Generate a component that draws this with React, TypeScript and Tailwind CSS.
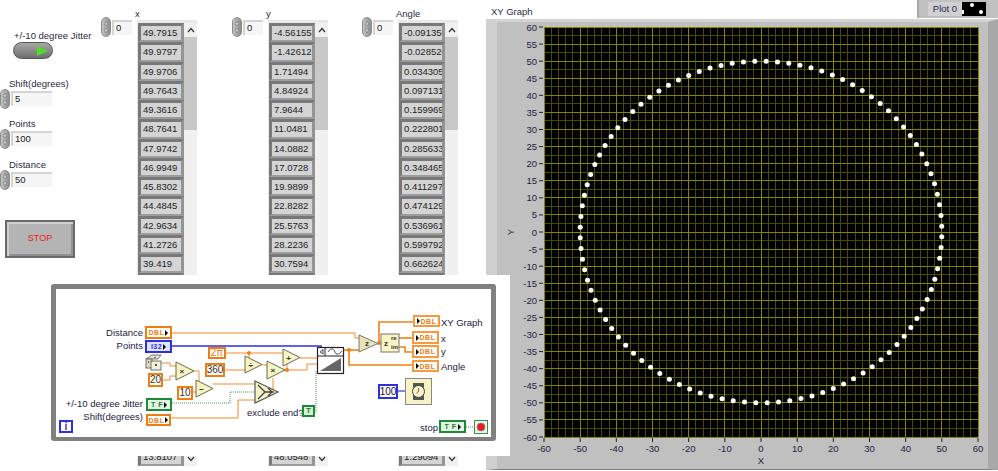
import React from 'react';

const STEP = 0.0628319;
const START = -0.09135;

const xTop = ['49.7915', '49.9797', '49.9706', '49.7643', '49.3616', '48.7641', '47.9742', '46.9949', '45.8302', '44.4845', '42.9634', '41.2726', '39.419'];
const yTop = ['-4.56155', '-1.42612', '1.71494', '4.84924', '7.9644', '11.0481', '14.0882', '17.0728', '19.9899', '22.8282', '25.5763', '28.2236', '30.7594'];
const aTop = ['-0.091350', '-0.028520', '0.034305', '0.097131', '0.159969', '0.222801', '0.285633', '0.348465', '0.411297', '0.474129', '0.536961', '0.599792', '0.662624'];

// rows between 13 and 22 sit behind the diagram window
const fill = (top: string[], last: string, fn: (a: number) => number) => {
  const rows = [...top];
  for (let k = 13; k < 22; k++) rows.push(fn(START + STEP * k).toPrecision(6));
  rows.push(last);
  return rows;
};

const xRows = fill(xTop, '13.8107', (a) => 50 * Math.cos(a));
const yRows = fill(yTop, '48.0548', (a) => 50 * Math.sin(a));
const aRows = fill(aTop, '1.29094', (a) => a);

const Spinner = ({ className = '' }: { className?: string }) => (
  <div className={`w-[10px] h-[20px] shrink-0 rounded-full bg-gradient-to-r from-[#c4c4c4] to-[#8e8e8e] border border-[#8c8c8c] flex flex-col items-center justify-center gap-[2px] ${className}`}>
    <svg width="6" height="6" viewBox="0 0 6 6"><path d="M3 1 L5 5 H1 Z" fill="#d8d8d8" stroke="#707070" strokeWidth="0.6" /></svg>
    <svg width="6" height="6" viewBox="0 0 6 6"><path d="M3 5 L5 1 H1 Z" fill="#d8d8d8" stroke="#707070" strokeWidth="0.6" /></svg>
  </div>
);

const NumInput = ({ value, className = '' }: { value: string; className?: string }) => (
  <div className={`h-[15px] bg-[#f5f5f5] border-t-2 border-l-2 border-[#d4d4d4] pl-[2px] text-[9.5px] leading-[12px] text-[#222] ${className}`}>
    {value}
  </div>
);

const LabeledNum = ({ label, value, className = '' }: { label: string; value: string; className?: string }) => (
  <div className={`flex flex-col ${className}`}>
    <div className="pl-[9px] text-[9.5px] leading-[12px] text-[#2a2a40] whitespace-nowrap">{label}</div>
    <div className="flex items-start mt-[-1px]">
      <Spinner />
      <NumInput value={value} className="ml-[1px] mt-[2px] w-[41px]" />
    </div>
  </div>
);

const Cell = ({ value }: { value: string }) => (
  <div className="h-[19.25px] w-[46px] shrink-0 border-t-[3px] border-l-[3px] border-r-[3px] border-b-2 border-t-[#787878] border-l-[#787878] border-r-[#949494] border-b-[#9c9c9c] bg-[#d4d4d4] overflow-hidden pl-[2px] text-[9.5px] leading-[13px] text-[#222] whitespace-nowrap">
    {value}
  </div>
);

const ScrollBar = () => (
  <div className="w-[13px] h-full bg-[#f0f0f0] flex flex-col">
    <div className="h-[14px] flex items-center justify-center">
      <svg width="8" height="6" viewBox="0 0 8 6"><path d="M1 5 L4 1.5 L7 5" fill="none" stroke="#333" strokeWidth="1.2" /></svg>
    </div>
    <div className="h-[93px] bg-[#c8c8c8]" />
    <div className="mt-auto h-[14px] flex items-center justify-center">
      <svg width="8" height="6" viewBox="0 0 8 6"><path d="M1 1 L4 4.5 L7 1" fill="none" stroke="#333" strokeWidth="1.2" /></svg>
    </div>
  </div>
);

const ArrayColumn = ({ label, rows, className = '' }: { label: string; rows: string[]; className?: string }) => (
  <div className={`flex flex-col shrink-0 pt-[8px] ${className}`}>
    <div className="pl-[34px] h-[12px] text-[9.5px] leading-[12px] text-[#2a2a40]">{label}</div>
    <div className="flex items-start">
      <div className="w-[36px] flex items-start">
        <Spinner className="mt-[-3px]" />
        <NumInput value="0" className="ml-[1px] w-[20px]" />
      </div>
      <div className="flex bg-[#e4e4e4] border-t-[3px] border-l-[1px] border-[#e8e8e8] h-[446px]">
        <div className="flex flex-col bg-[#bcbcbc]">
          {rows.map((r, i) => (
            <Cell key={i} value={r} />
          ))}
        </div>
        <div className="h-[443px]">
          <ScrollBar />
        </div>
      </div>
    </div>
  </div>
);

const px = (v: number) => 544 + ((v + 60) * 434) / 120;
const py = (v: number) => 27 + ((60 - v) * 410) / 120;

const range = (from: number, to: number, step: number) => {
  const out: number[] = [];
  for (let v = from; v <= to + 0.001; v += step) out.push(v);
  return out;
};

const dots = range(0, 99, 1).map((k) => {
  const a = START + STEP * k;
  return { x: 50 * Math.cos(a), y: 50 * Math.sin(a) };
});

const Graph = () => (
  <svg width="491" height="448" viewBox="497 22 491 448" className="block">
    <rect x="544" y="27" width="434" height="410" fill="#000" />
    <g shapeRendering="crispEdges">
      {range(-60, 60, 2).map((v) => (
        <line key={`vm${v}`} x1={px(v)} x2={px(v)} y1="27" y2="437" stroke="#4a4a00" strokeWidth="1" />
      ))}
      {range(-60, 60, 2.5).map((v) => (
        <line key={`hm${v}`} x1="544" x2="978" y1={py(v)} y2={py(v)} stroke="#4a4a00" strokeWidth="1" />
      ))}
      {range(-60, 60, 10).map((v) => (
        <line key={`vM${v}`} x1={px(v)} x2={px(v)} y1="27" y2="437" stroke="#858500" strokeWidth="1" />
      ))}
      {range(-60, 60, 5).map((v) => (
        <line key={`hM${v}`} x1="544" x2="978" y1={py(v)} y2={py(v)} stroke="#858500" strokeWidth="1" />
      ))}
    </g>
    {dots.map((d, i) => (
      <circle key={i} cx={px(d.x)} cy={py(d.y)} r="2.5" fill="#fff" />
    ))}
    {range(-60, 60, 5).map((v) => (
      <g key={`yl${v}`}>
        <line x1="539" x2="543" y1={py(v)} y2={py(v)} stroke="#222" />
        <text x="537" y={py(v) + 3.5} textAnchor="end" fontSize="9.5" fill="#222240">{v}</text>
      </g>
    ))}
    {range(-60, 60, 10).map((v) => (
      <g key={`xl${v}`}>
        <line x1={px(v)} x2={px(v)} y1="438" y2="442" stroke="#222" />
        <text x={px(v)} y="452" textAnchor="middle" fontSize="9.5" fill="#222240">{v}</text>
      </g>
    ))}
    <text x={px(0)} y="464" textAnchor="middle" fontSize="9.5" fill="#222240">X</text>
    <text x="514" y="232" textAnchor="middle" fontSize="9.5" fill="#222240" transform="rotate(-90 514 232)">Y</text>
  </svg>
);

// control terminals carry the arrow on the right, indicators on the left
const Term = ({ label, kind, className = '' }: { label: string; kind: 'in' | 'out'; className?: string }) => (
  <div className={`absolute flex items-center justify-center font-bold text-[7px] leading-none tracking-[0.5px] ${className}`}>
    {kind === 'out' && <span className="w-0 h-0 border-y-[3px] border-y-transparent border-l-[3px] border-l-black mr-[1px]" />}
    <span>{label}</span>
    {kind === 'in' && <span className="w-0 h-0 border-y-[3px] border-y-transparent border-l-[3px] border-l-black ml-[1px]" />}
  </div>
);

const Const = ({ value, className = '' }: { value: string; className?: string }) => (
  <div className={`absolute flex items-center justify-center bg-white border-2 border-[#f07c14] text-[10px] leading-none text-[#3a2a10] ${className}`}>{value}</div>
);

const Tri = ({ x, y, w, h, sym }: { x: number; y: number; w: number; h: number; sym: string }) => (
  <g>
    <path d={`M${x} ${y} L${x + w} ${y + h / 2} L${x} ${y + h} Z`} fill="#f7f3c4" stroke="#6a6a50" strokeWidth="1" />
    <text x={x + w * 0.33} y={y + h / 2 + 3} textAnchor="middle" fontSize="8" fontWeight="bold" fill="#333">{sym}</text>
  </g>
);

const lbl = 'absolute text-[9.5px] leading-[12px] text-[#222240] whitespace-nowrap';

const Diagram = () => (
  <div className="absolute left-[51px] top-[275px] w-[459px] h-[181px] bg-white">
    <div className="absolute left-0 top-[9px] w-[445px] h-[157px] rounded-[3px] border-l-[5px] border-t-[5px] border-r-[5px] border-b-[4px] border-[#808080] bg-white" />
    <svg width="459" height="181" viewBox="51 275 459 181" className="absolute left-0 top-0">
      <g fill="none" stroke="#f58a28" strokeWidth="1">
        <path d="M172 333 H355 V338 H360" />
        <path d="M225 353 H283" />
        <path d="M249 353 V359" />
        <path d="M225 370 H245" />
        <path d="M262 365 H268" />
        <path d="M161 363 H170 V366 H176" />
        <path d="M162 380 H170 V376 H176" />
        <path d="M194 371 H199 V384" />
        <path d="M192 392 H196" />
        <path d="M213 384 H255" />
        <path d="M171 418 H238 V400 H255" />
        <path d="M278 392 H273 V378" />
        <path d="M285 370 H307 V364 H317" />
        <path d="M287 370 V361 H284" />
        <path d="M300 358 H317" />
      </g>
      <g fill="none" stroke="#f08214" strokeWidth="1.6">
        <path d="M344 350 H360" />
        <path d="M349 350 V365 H412" />
        <path d="M378 343 H381" />
        <path d="M379 343 V322 H413" />
        <path d="M399 338 H412" />
        <path d="M399 347 H405 V352 H412" />
      </g>
      <circle cx="249" cy="353" r="2" fill="#f08214" />
      <circle cx="287" cy="370" r="2" fill="#f08214" />
      <circle cx="349" cy="350" r="2" fill="#f08214" />
      <circle cx="379" cy="343" r="2" fill="#f08214" />
      <path d="M172 346 H321 V350" fill="none" stroke="#2f2fe0" strokeWidth="1.6" />
      <path d="M398 391 H405" fill="none" stroke="#5050e0" strokeWidth="1.4" />
      <g fill="none" stroke="#3aa050" strokeWidth="1" strokeDasharray="1 1">
        <path d="M172 403 H230 V392 H255" />
        <path d="M316 371 V412" />
        <path d="M466 427 H474" />
      </g>
      <Tri x={176} y={362} w={18} h={18} sym="×" />
      <Tri x={196} y={380} w={17} h={17} sym="−" />
      <Tri x={245} y={356} w={17} h={17} sym="÷" />
      <Tri x={267} y={361} w={18} h={18} sym="×" />
      <Tri x={283} y={349} w={17} h={17} sym="+" />
      <path d="M255 381 L278 392 L255 403 Z" fill="#f7f3c4" stroke="#555" strokeWidth="1.2" />
      <path d="M258 385 L265 392 L258 399 M265 392 H274 M268 388 L272 392 L268 396" fill="none" stroke="#444" strokeWidth="1.4" />
      <path d="M359 335 L378 343.5 L359 352 Z" fill="#e8e4b8" stroke="#777" strokeWidth="1" />
      <text x="367" y="346" textAnchor="middle" fontSize="8" fontWeight="bold" fill="#333">z</text>
      <rect x="381" y="334" width="18" height="18" fill="#f7f3c4" stroke="#777" />
      <text x="384" y="346" fontSize="8" fontWeight="bold" fill="#333">z</text>
      <text x="391" y="340" fontSize="6" fontWeight="bold" fill="#333">re</text>
      <text x="391" y="349" fontSize="6" fontWeight="bold" fill="#333">im</text>
      {/* ramp pattern */}
      <rect x="317.5" y="347.5" width="26" height="26" fill="#fff" stroke="#222" strokeWidth="1.2" />
      <line x1="318" y1="356" x2="343" y2="356" stroke="#222" />
      <line x1="325" y1="348" x2="325" y2="356" stroke="#222" />
      <path d="M320 352 L323 349.5 V354 Z" fill="#fff" stroke="#222" strokeWidth="0.8" />
      <path d="M328 352 C331 347 334 349 335 352 C336 355 339 355 342 351" fill="none" stroke="#222" strokeWidth="0.8" />
      <path d="M320 371 L341 358 V371 Z" fill="#666" />
      {/* dice */}
      <g stroke="#555" strokeWidth="0.8">
        <path d="M146 359 L152 355 H161 L158 359 Z" fill="#ece4c8" />
        <rect x="146" y="359" width="6" height="9" fill="#e4dcc0" />
        <rect x="151" y="361" width="10" height="9" fill="#f4eed8" />
      </g>
      <circle cx="156" cy="365" r="1" fill="#222" />
      <circle cx="148.5" cy="362" r="0.7" fill="#222" />
      <circle cx="155" cy="357.5" r="0.7" fill="#222" />
      {/* wait timer */}
      <rect x="405.5" y="378.5" width="26" height="26" fill="#f7f3c4" stroke="#888" />
      <rect x="413" y="383" width="11" height="17" fill="#555" />
      <circle cx="418.5" cy="391.5" r="6" fill="#f7f3c4" stroke="#444" />
      <path d="M418.5 388 V391.5 L416.5 393" fill="none" stroke="#444" strokeWidth="0.8" />
      {/* stop terminal */}
      <rect x="474.5" y="420.5" width="13" height="13" fill="#eaf4ea" stroke="#3a9050" />
      <circle cx="481" cy="427" r="4" fill="#f01818" stroke="#888" strokeWidth="0.8" />
    </svg>

    <div className={`${lbl} right-[367px] top-[52px]`}>Distance</div>
    <div className={`${lbl} right-[367px] top-[65px]`}>Points</div>
    <div className={`${lbl} right-[367px] top-[123px]`}>+/-10 degree Jitter</div>
    <div className={`${lbl} right-[367px] top-[136px]`}>Shift(degrees)</div>
    <div className={`${lbl} left-[196px] top-[132px]`}>exclude end?</div>
    <div className={`${lbl} left-[369px] top-[147px]`}>stop</div>
    <div className={`${lbl} left-[390px] top-[42px]`}>XY Graph</div>
    <div className={`${lbl} left-[390px] top-[58px]`}>x</div>
    <div className={`${lbl} left-[390px] top-[71px]`}>y</div>
    <div className={`${lbl} left-[390px] top-[86px]`}>Angle</div>

    <Term kind="in" label="DBL" className="left-[94px] top-[51px] w-[27px] h-[13px] bg-white border-2 border-[#f07c14] text-[#f07c14]" />
    <Term kind="in" label="I32" className="left-[94px] top-[65px] w-[27px] h-[13px] bg-[#dfe3ff] border-2 border-[#2f2fe0] text-[#2f2fe0]" />
    <Term kind="in" label="T F" className="left-[95px] top-[123px] w-[26px] h-[13px] bg-[#e2f4e2] border-2 border-[#1c8a38] text-[#1c7a30]" />
    <Term kind="in" label="DBL" className="left-[95px] top-[139px] w-[25px] h-[12px] bg-white border-2 border-[#f07c14] text-[#f07c14]" />
    <Term kind="out" label="DBL" className="left-[362px] top-[40px] w-[27px] h-[12px] bg-white border-2 border-[#f79a3e] text-[#f07c14]" />
    <Term kind="out" label="DBL" className="left-[361px] top-[56px] w-[27px] h-[13px] bg-white border-2 border-[#f79a3e] text-[#f07c14]" />
    <Term kind="out" label="DBL" className="left-[361px] top-[70px] w-[27px] h-[13px] bg-white border-2 border-[#f79a3e] text-[#f07c14]" />
    <Term kind="out" label="DBL" className="left-[361px] top-[85px] w-[27px] h-[12px] bg-white border-2 border-[#f79a3e] text-[#f07c14]" />
    <Term kind="in" label="T F" className="left-[388px] top-[145px] w-[27px] h-[13px] bg-[#e2f4e2] border-2 border-[#1c8a38] text-[#1c7a30]" />
    <div className="absolute left-[251px] top-[130px] w-[13px] h-[12px] bg-[#d8f0d8] border-2 border-[#1c8a38] flex items-center justify-center font-bold text-[8px] leading-none text-[#1c7a30]">T</div>

    <Const value="20" className="left-[97px] top-[98px] w-[15px] h-[14px]" />
    <Const value="2π" className="left-[157px] top-[72px] w-[18px] h-[12px] !text-[#f07c14]" />
    <Const value="360" className="left-[154px] top-[88px] w-[20px] h-[14px]" />
    <Const value="10" className="left-[126px] top-[111px] w-[16px] h-[14px]" />
    <div className="absolute left-[327px] top-[109px] w-[20px] h-[15px] bg-white border-2 border-[#2f2fe0] flex items-center justify-center text-[10px] leading-none text-[#10103a]">100</div>

    <div className="absolute left-[8px] top-[145px] w-[14px] h-[13px] bg-white border-2 border-[#2f2fe0] flex items-center justify-center text-[10px] font-bold leading-none text-[#2f2fe0]">i</div>
  </div>
);

export default function App() {
  return (
    <div className="relative w-[998px] h-[471px] overflow-hidden bg-white flex items-start font-['Liberation_Sans',Arial,sans-serif]">
      {/* controls column */}
      <div className="w-[101px] shrink-0 flex flex-col">
        <div className="pl-[14px] pt-[30px] text-[9.5px] leading-[12px] text-[#2a2a40] whitespace-nowrap">+/-10 degree Jitter</div>
        <div className="ml-[13px] w-[40px] h-[17px] rounded-full bg-gradient-to-b from-[#a8a8a8] to-[#6e6e6e] border border-[#555] flex items-center justify-end pr-[3px]">
          <svg width="12" height="10" viewBox="0 0 12 10"><path d="M0 0 L11 5 L0 10 Z" fill="#4fdc28" /></svg>
        </div>
        <LabeledNum label="Shift(degrees)" value="5" className="mt-[19px]" />
        <LabeledNum label="Points" value="100" className="mt-[9px]" />
        <LabeledNum label="Distance" value="50" className="mt-[10px]" />
        <button className="ml-[5px] mt-[30px] w-[70px] h-[38px] border-2 border-[#6a6a6a] bg-[#b4b4b4] shadow-[inset_2px_2px_0_#d0d0d0,inset_-2px_-2px_0_#909090] text-[9px] text-[#f02020]">STOP</button>
      </div>

      <ArrayColumn label="x" rows={xRows} />
      <ArrayColumn label="y" rows={yRows} className="ml-[35px]" />
      <ArrayColumn label="Angle" rows={aRows} className="ml-[34px]" />

      {/* graph */}
      <div className="ml-[28px] w-[512px] shrink-0 flex flex-col">
        <div className="h-[19px] flex items-start justify-between">
          <div className="pl-[5px] pt-[6px] text-[9.5px] leading-[12px] text-[#2a2a40]">XY Graph</div>
          <div className="w-[81px] h-[18px] bg-[#c0c0c0] border-l-2 border-[#a8a8a8] flex items-center pl-[9px]">
            <div className="w-[34px] h-[14px] bg-[#cfcfd4] text-[9.5px] leading-[14px] text-center text-[#2a2a40]">Plot 0</div>
            <div className="relative w-[24px] h-[14px] bg-black">
              <div className="absolute left-[8px] top-[1px] w-[4px] h-[4px] rounded-full bg-white" />
              <div className="absolute left-[17px] top-[8px] w-[4px] h-[4px] rounded-full bg-white" />
              <div className="absolute left-0 top-[8px] w-[2px] h-[4px] bg-white" />
            </div>
          </div>
        </div>
        <div className="h-[451px] bg-[#c0c0c0] border-l-[11px] border-l-[#d0d0d0] border-t-[3px] border-t-[#d4d4d4] border-r-[10px] border-r-[#a8a8a8] border-b-[1px] border-b-[#808080]">
          <Graph />
        </div>
      </div>

      <Diagram />
    </div>
  );
}
